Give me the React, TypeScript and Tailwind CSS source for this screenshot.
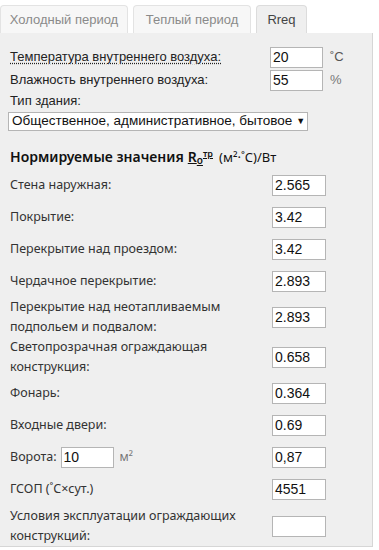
import React from "react";

const rows: { label: string[]; value: string; tall?: boolean }[] = [
  { label: ["Стена наружная:"], value: "2.565" },
  { label: ["Покрытие:"], value: "3.42" },
  { label: ["Перекрытие над проездом:"], value: "3.42" },
  { label: ["Чердачное перекрытие:"], value: "2.893" },
  { label: ["Перекрытие над неотапливаемым", "подпольем и подвалом:"], value: "2.893", tall: true },
  { label: ["Светопрозрачная ограждающая", "конструкция:"], value: "0.658", tall: true },
  { label: ["Фонарь:"], value: "0.364" },
  { label: ["Входные двери:"], value: "0.69" },
];

function Field({ value, className = "" }: { value: string; className?: string }) {
  return (
    <div
      className={`h-[21px] shrink-0 bg-white border border-[#b5b5b5] pl-[2px] flex items-center text-[14px] text-[#111] font-['Liberation_Sans',Arial,sans-serif] ${className}`}
    >
      {value}
    </div>
  );
}

export default function App() {
  return (
    <div className="w-[379px] h-[550px] bg-white overflow-hidden text-[#222]">
      {/* Tabs */}
      <div className="flex items-end gap-[5px] pt-[5px] h-[33px] font-['Liberation_Sans',Arial,sans-serif] text-[13px]">
        <div className="h-[28px] w-[128px] flex items-center justify-center bg-[#f7f7f7] border border-b-0 border-[#e3e3e3] rounded-t-[4px] text-[#8a8a8a]">
          Холодный период
        </div>
        <div className="h-[28px] w-[118px] flex items-center justify-center bg-[#f7f7f7] border border-b-0 border-[#e3e3e3] rounded-t-[4px] text-[#8a8a8a]">
          Теплый период
        </div>
        <div className="h-[28px] w-[51px] flex items-center justify-center bg-[#efefef] border border-b-0 border-[#dcdcdc] rounded-t-[4px] text-[#444]">
          Rreq
        </div>
      </div>

      {/* Panel */}
      <div className="w-[373px] h-[514px] bg-[#efefef] border-r border-b border-[#d6d6d6]">
        <div className="pl-[10px] pt-[14px] font-['Liberation_Sans',Arial,sans-serif] text-[13px]">
          <div className="flex items-center h-[20px]">
            <span className="w-[260px] underline decoration-dotted underline-offset-2">Температура внутреннего воздуха:</span>
            <Field value="20" className="w-[53px]" />
            <span className="ml-[7px] text-[#555]">˚C</span>
          </div>
          <div className="flex items-center h-[20px] mt-[3px]">
            <span className="w-[260px]">Влажность внутреннего воздуха:</span>
            <Field value="55" className="w-[53px]" />
            <span className="ml-[7px] text-[#777]">%</span>
          </div>
          <div className="mt-[2px] h-[18px] flex items-center">Тип здания:</div>
          <div className="ml-[-2px] mt-[2px] w-[300px] h-[19px] bg-white border border-[#b5b5b5] flex items-center pl-[3px] text-[13.5px] text-[#111] whitespace-nowrap">
            Общественное, административное, бытовое
            <span className="ml-[4px] text-[9px]">▼</span>
          </div>
        </div>

        <div className="pl-[10px] font-['Noto_Sans','Open_Sans',sans-serif] text-[12.5px]">
          <div className="h-[38px] pt-[14px] flex items-center font-semibold text-[14px] text-[#111] whitespace-nowrap leading-none">
            Нормируемые значения
            <span className="ml-[4px] underline underline-offset-1">R</span>
            <span className="underline text-[10px] relative top-[3px]">o</span>
            <span className="underline text-[9px] relative top-[-4px]">тр</span>
            <span className="ml-[6px] font-normal text-[13px]">(м²·˚C)/Вт</span>
          </div>

          {rows.map((r) => (
            <div key={r.value + r.label[0]} className={`flex items-center ${r.tall ? "h-[40px]" : "h-[32px]"}`}>
              <div className="w-[262px] leading-[20px] text-[#333]">
                {r.label.map((l) => (
                  <div key={l}>{l}</div>
                ))}
              </div>
              <Field value={r.value} className="w-[54px]" />
            </div>
          ))}

          <div className="flex items-center h-[32px]">
            <div className="w-[262px] flex items-center text-[#333]">
              Ворота:
              <Field value="10" className="w-[53px] ml-[4px]" />
              <span className="ml-[6px] text-[#777] text-[12px]">м²</span>
            </div>
            <Field value="0,87" className="w-[54px]" />
          </div>
          <div className="flex items-center h-[32px]">
            <div className="w-[262px] text-[#333]">ГСОП (˚C×сут.)</div>
            <Field value="4551" className="w-[54px]" />
          </div>
          <div className="flex items-center h-[42px]">
            <div className="w-[262px] leading-[20px] text-[#333]">
              <div>Условия эксплуатации ограждающих</div>
              <div>конструкций:</div>
            </div>
            <Field value="" className="w-[54px]" />
          </div>
        </div>
      </div>
    </div>
  );
}
